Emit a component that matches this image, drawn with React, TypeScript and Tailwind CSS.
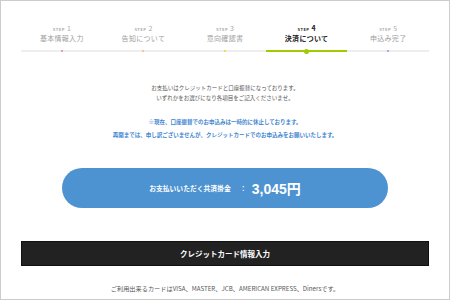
import React from 'react'

const font = { fontFamily: '"Noto Sans CJK JP", "Liberation Sans", sans-serif' }

type Step = { no: number; label: string; dot: string }

const steps: Step[] = [
  { no: 1, label: '基本情報入力', dot: 'bg-[#f49aa6]' },
  { no: 2, label: '告知について', dot: 'bg-[#f6c98a]' },
  { no: 3, label: '意向確認書', dot: 'bg-[#e8dc5a]' },
  { no: 4, label: '決済について', dot: 'bg-[#9fcc00]' },
  { no: 5, label: '申込み完了', dot: 'bg-[#9bb2ec]' },
]

const ACTIVE = 4

export default function App() {
  return (
    <div
      className="w-[450px] h-[300px] border border-[#cccccc] bg-white overflow-hidden"
      style={font}
    >
      {/* Steps */}
      <div className="mx-[20px] mt-[23px] grid grid-cols-5">
        {steps.map((s) => {
          const active = s.no === ACTIVE
          return (
            <div key={s.no} className="flex flex-col items-center">
              <div
                className={`flex items-baseline h-[8px] leading-[8px] font-bold ${
                  active ? 'text-[#222]' : 'text-[#aaa]'
                }`}
              >
                <span className="text-[4px] tracking-[0.5px] mr-[2px]">STEP</span>
                <span className={`text-[7px] ${active ? 'font-bold' : 'font-normal'}`}>{s.no}</span>
              </div>
              <div
                className={`mt-[1px] text-[7px] leading-[10px] tracking-[0.3px] ${
                  active ? 'text-[#222] font-bold' : 'text-[#a0a0a0]'
                }`}
              >
                {s.label}
              </div>
            </div>
          )
        })}
      </div>

      {/* Progress bar */}
      <div className="mx-[20px] mt-[7px] grid grid-cols-5 h-[2px] bg-[#eeeeee]">
        {steps.map((s) => {
          const active = s.no === ACTIVE
          return (
            <div
              key={s.no}
              className={`flex items-center justify-center h-[2px] ${active ? 'bg-[#9fcc00]' : ''}`}
            >
              {active ? (
                <span className="block w-[5px] h-[5px] rounded-full bg-[#9fcc00] shrink-0" />
              ) : (
                <span className={`block w-[2px] h-[2px] ${s.dot} shrink-0`} />
              )}
            </div>
          )
        })}
      </div>

      {/* Notice */}
      <div className="mt-[31px] text-center text-[5.5px] leading-[10px] text-[#555]">
        <p>お支払いはクレジットカードと口座振替になっております。</p>
        <p>いずれかをお選びになり各項目をご記入くださいませ。</p>
      </div>
      <div className="mt-[13px] text-center text-[5.5px] leading-[13px] font-bold text-[#3f86d1]">
        <p>※現在、口座振替でのお申込みは一時的に休止しております。</p>
        <p>再開までは、申し訳ございませんが、クレジットカードでのお申込みをお願いいたします。</p>
      </div>

      {/* Amount */}
      <div className="mx-[61px] mt-[26px] h-[40px] rounded-full bg-[#4d93d1] flex items-center justify-center text-white font-bold">
        <span className="text-[6.8px]">お支払いいただく共済掛金</span>
        <span className="text-[7px] ml-[9px] mr-[5px]">：</span>
        <span className="text-[14px] leading-none" style={{ fontFamily: '"Liberation Sans", "Noto Sans CJK JP", sans-serif' }}>
          3,045<span style={font}>円</span>
        </span>
      </div>

      {/* Card button */}
      <div className="mx-[20px] mt-[33px] h-[25px] bg-[#222222] border border-[#111] flex items-center justify-center">
        <span className="text-white font-bold text-[7.5px]">クレジットカード情報入力</span>
      </div>

      {/* Footer */}
      <p className="mt-[18px] text-center text-[6.2px] leading-[10px] text-[#555]">
        ご利用出来るカードはVISA、MASTER、JCB、AMERICAN EXPRESS、Dinersです。
      </p>
    </div>
  )
}
